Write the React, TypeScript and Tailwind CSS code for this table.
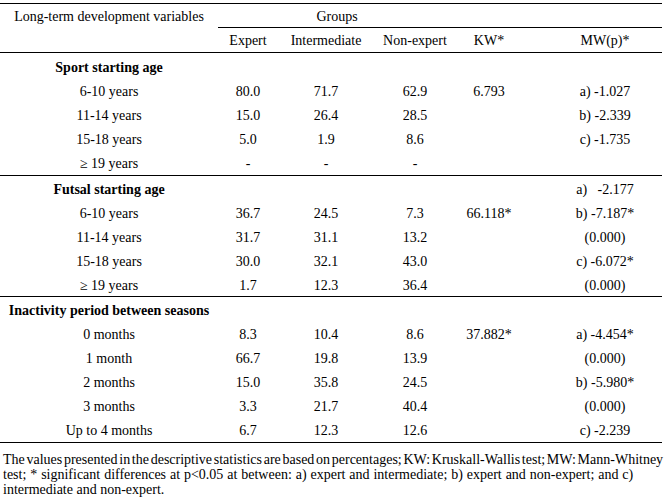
import React from 'react';

// Long-term development variables table (descriptive stats + KW / MW tests)

type Row = {
  label: string;
  expert?: string;
  inter?: string;
  non?: string;
  kw?: string;
  mw?: string;
  heading?: boolean;
};

const sections: { rows: Row[]; pad: string }[] = [
  {
    pad: 'pt-[1px] pb-[1px]',
    rows: [
      { label: 'Sport starting age', heading: true },
      { label: '6-10 years', expert: '80.0', inter: '71.7', non: '62.9', kw: '6.793', mw: 'a) -1.027' },
      { label: '11-14 years', expert: '15.0', inter: '26.4', non: '28.5', mw: 'b) -2.339' },
      { label: '15-18 years', expert: '5.0', inter: '1.9', non: '8.6', mw: 'c) -1.735' },
      { label: '≥ 19 years', expert: '-', inter: '-', non: '-' },
    ],
  },
  {
    pad: 'pt-0 pb-0',
    rows: [
      { label: 'Futsal starting age', heading: true, mw: 'a)   -2.177' },
      { label: '6-10 years', expert: '36.7', inter: '24.5', non: '7.3', kw: '66.118*', mw: 'b) -7.187*' },
      { label: '11-14 years', expert: '31.7', inter: '31.1', non: '13.2', mw: '(0.000)' },
      { label: '15-18 years', expert: '30.0', inter: '32.1', non: '43.0', mw: 'c) -6.072*' },
      { label: '≥ 19 years', expert: '1.7', inter: '12.3', non: '36.4', mw: '(0.000)' },
    ],
  },
  {
    pad: 'pt-0 pb-[1px]',
    rows: [
      { label: 'Inactivity period between seasons', heading: true },
      { label: '0 months', expert: '8.3', inter: '10.4', non: '8.6', kw: '37.882*', mw: 'a) -4.454*' },
      { label: '1 month', expert: '66.7', inter: '19.8', non: '13.9', mw: '(0.000)' },
      { label: '2 months', expert: '15.0', inter: '35.8', non: '24.5', mw: 'b) -5.980*' },
      { label: '3 months', expert: '3.3', inter: '21.7', non: '40.4', mw: '(0.000)' },
      { label: 'Up to 4 months', expert: '6.7', inter: '12.3', non: '12.6', mw: 'c) -2.239' },
    ],
  },
];

const grid = 'grid grid-cols-[218px_60px_96px_82px_66px_140px]';

function DataRow({ row }: { row: Row }) {
  return (
    <div className={`${grid} h-[24px] pt-[4px] leading-[20px] text-center`}>
      <div className={row.heading ? 'font-bold' : ''}>{row.label}</div>
      <div>{row.expert}</div>
      <div>{row.inter}</div>
      <div>{row.non}</div>
      <div>{row.kw}</div>
      <div className="pl-[26px] whitespace-pre">{row.mw}</div>
    </div>
  );
}

export default function App() {
  return (
    <div
      className="min-h-screen bg-white text-black pt-[3px]"
      style={{ fontFamily: '"Liberation Serif", "Times New Roman", serif' }}
    >
      <div className="w-[662px] text-[14px] leading-[22px]">
        <div className="border-t border-black flex">
          <div className="w-[218px] h-[24px] pt-[2px] text-center">Long-term development variables</div>
          <div className="flex-1">
            <div className="h-[24px] pt-[2px] border-b border-black">
              <div className="w-[238px] text-center">Groups</div>
            </div>
            <div className="grid grid-cols-[60px_96px_82px_66px_140px] h-[24px] pt-[2px] text-center">
              <div>Expert</div>
              <div>Intermediate</div>
              <div>Non-expert</div>
              <div>KW*</div>
              <div className="pl-[26px]">MW(p)*</div>
            </div>
          </div>
        </div>
        {sections.map((s, i) => (
          <div key={i} className={`border-t border-black ${s.pad}`}>
            {s.rows.map((r, j) => (
              <DataRow key={j} row={r} />
            ))}
          </div>
        ))}
        <div className="border-t border-black" />
      </div>
      <div className="pt-[9px] pl-[3px] text-[14px] leading-[15px] whitespace-nowrap">
        <span className="block [word-spacing:-1.8px]">
          The values presented in the descriptive statistics are based on percentages; KW: Kruskall-Wallis test; MW: Mann-Whitney
        </span>
        <span className="block [word-spacing:0.4px]">
          test; * significant differences at p&lt;0.05 at between: a) expert and intermediate; b) expert and non-expert; and c)
        </span>
        <span className="block">intermediate and non-expert.</span>
      </div>
    </div>
  );
}
